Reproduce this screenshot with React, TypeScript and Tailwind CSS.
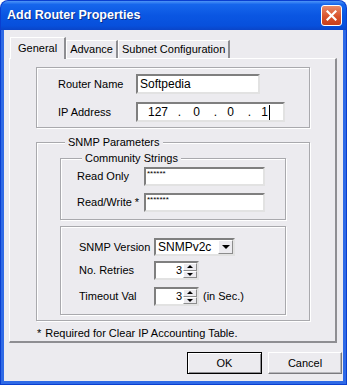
import { ReactNode } from "react";

const font = { fontFamily: '"Liberation Sans", Arial, sans-serif' };

// sunken edit box
const Edit = ({ children, className = "" }: { children?: ReactNode; className?: string }) => (
  <div
    className={`flex items-center bg-white border-2 border-t-[#7f7f7f] border-l-[#7f7f7f] border-b-[#e2e2e2] border-r-[#e2e2e2] ${className}`}
  >
    {children}
  </div>
);

// etched group box, optional caption sitting on the top line
const Group = ({ label, className = "", children }: { label?: string; className?: string; children: ReactNode }) => (
  <div className={`border border-[#a9a9ad] shadow-[1px_1px_0_#fff,inset_1px_1px_0_#fff] ${className}`}>
    {label && (
      <span className="block w-fit -mt-[7px] ml-[5px] px-[3px] bg-[#ecebef] leading-[13px]">{label}</span>
    )}
    {children}
  </div>
);

const Spinner = ({ value }: { value: string }) => (
  <Edit className="w-[45px] h-[19px] justify-end">
    <span className="pr-[1px]">{value}</span>
    <div className="flex flex-col w-[14px] h-full">
      <div className="flex-1 flex items-center justify-center bg-[#ecebef] border border-t-white border-l-white border-b-[#8c8c8c] border-r-[#8c8c8c]">
        <div className="w-0 h-0 border-x-[3px] border-x-transparent border-b-[3px] border-b-black" />
      </div>
      <div className="flex-1 flex items-center justify-center bg-[#ecebef] border border-t-white border-l-white border-b-[#8c8c8c] border-r-[#8c8c8c]">
        <div className="w-0 h-0 border-x-[3px] border-x-transparent border-t-[3px] border-t-black" />
      </div>
    </div>
  </Edit>
);

const Tab = ({ label, active }: { label: string; active?: boolean }) => (
  <div
    className={`flex items-center border-t border-l border-t-white border-l-white border-r-2 border-r-[#8e8e92] ${
      active ? "relative z-10 h-[22px] -mb-px px-[7px] bg-[#ecebef]" : "h-[18px] px-[3px]"
    }`}
  >
    {label}
  </div>
);

export default function App() {
  return (
    <div style={font} className="w-[347px] h-[385px] text-[11px] text-black bg-[#0a3fd0] rounded-t-[8px] p-px">
      {/* title bar */}
      <div className="h-[29px] flex items-center justify-between pl-[6px] pr-[4px] rounded-t-[7px] bg-[linear-gradient(#4d94f7_0%,#1666ec_12%,#0a56e2_50%,#0750dc_85%,#0a45c8_100%)]">
        <span className="text-white font-bold text-[12.5px] [text-shadow:1px_1px_0_#0a2f8a]">Add Router Properties</span>
        <div className="w-[21px] h-[21px] rounded-[3px] border border-white flex items-center justify-center bg-[linear-gradient(#e98b6a,#d9532c_55%,#c73e1b)]">
          <svg width="11" height="11" viewBox="0 0 11 11">
            <path d="M1.5 1.5 L9.5 9.5 M9.5 1.5 L1.5 9.5" stroke="white" strokeWidth="2.2" strokeLinecap="square" />
          </svg>
        </div>
      </div>

      {/* window body */}
      <div className="h-[354px] border-x-[3px] border-b-[3px] border-[#2f6ae6] bg-[#ecebef] px-[5px] pt-[7px]">
        {/* tabs */}
        <div className="flex items-end h-[21px] pl-[1px]">
          <Tab label="General" active />
          <Tab label="Advance" />
          <Tab label="Subnet Configuration" />
        </div>

        {/* panel */}
        <div className="w-[328px] h-[285px] border border-t-white border-l-white border-r-2 border-b-2 border-r-[#8e8e92] border-b-[#8e8e92] pt-[8px] pl-[26px]">
          <Group className="w-[274px] h-[61px] pt-[6px] pl-[21px]">
            <div className="flex items-center h-[20px]">
              <span className="w-[78px]">Router Name</span>
              <Edit className="w-[124px] h-[20px] pl-[2px] text-[12px]">Softpedia</Edit>
            </div>
            <div className="flex items-center h-[20px] mt-[8px]">
              <span className="w-[78px]">IP Address</span>
              <Edit className="w-[149px] h-[20px] text-[12px]">
                <span className="w-[30px] text-right">127</span>
                <span className="w-[13px] text-right">.</span>
                <span className="w-[19px] text-right">0</span>
                <span className="w-[17px] text-right">.</span>
                <span className="w-[17px] text-right">0</span>
                <span className="w-[17px] text-right">.</span>
                <span className="w-[17px] text-right">1</span>
                <span className="w-px h-[15px] bg-black ml-[1px]" />
              </Edit>
            </div>
          </Group>

          <Group label="SNMP Parameters" className="w-[274px] h-[179px] mt-[14px] pl-[23px]">
            <Group label="Community Strings" className="w-[226px] h-[62px] mt-[9px] pl-[16px]">
              <div className="flex items-center h-[19px] mt-[2px]">
                <span className="w-[67px]">Read Only</span>
                <Edit className="w-[121px] h-[19px] items-start pl-[1px] text-[8px] leading-[10px]">******</Edit>
              </div>
              <div className="flex items-center h-[19px] mt-[7px]">
                <span className="w-[67px]">Read/Write *</span>
                <Edit className="w-[121px] h-[19px] items-start pl-[1px] text-[8px] leading-[10px]">*******</Edit>
              </div>
            </Group>

            <Group className="w-[226px] h-[89px] mt-[6px] pl-[18px] pt-[11px]">
              <div className="flex items-center h-[18px]">
                <span className="w-[75px]">SNMP Version</span>
                <Edit className="w-[81px] h-[18px] justify-between pl-[2px] text-[12px]">
                  SNMPv2c
                  <div className="w-[15px] h-full flex items-center justify-center bg-[#ecebef] border border-t-white border-l-white border-b-[#8c8c8c] border-r-[#8c8c8c]">
                    <div className="w-0 h-0 border-x-[4px] border-x-transparent border-t-[4px] border-t-black" />
                  </div>
                </Edit>
              </div>
              <div className="flex items-center h-[19px] mt-[5px]">
                <span className="w-[75px]">No. Retries</span>
                <Spinner value="3" />
              </div>
              <div className="flex items-center h-[19px] mt-[7px]">
                <span className="w-[75px]">Timeout Val</span>
                <Spinner value="3" />
                <span className="ml-[4px]">(in Sec.)</span>
              </div>
            </Group>
          </Group>

          <div className="mt-[6px] ml-[1px] leading-[13px]">
            <span className="mr-[4px]">*</span>Required for Clear IP Accounting Table.
          </div>
        </div>

        {/* buttons */}
        <div className="flex justify-end gap-[6px] mt-[9px] w-[333px]">
          <button className="w-[75px] h-[22px] border border-black bg-[#ecebef] shadow-[inset_1px_1px_0_#fff,inset_-1px_-1px_0_#8e8e92]">OK</button>
          <button className="w-[74px] h-[22px] bg-[#ecebef] border border-t-white border-l-white border-r-[#7a7a7e] border-b-[#7a7a7e] shadow-[inset_-1px_-1px_0_#b8b8bc]">Cancel</button>
        </div>
      </div>
    </div>
  );
}
